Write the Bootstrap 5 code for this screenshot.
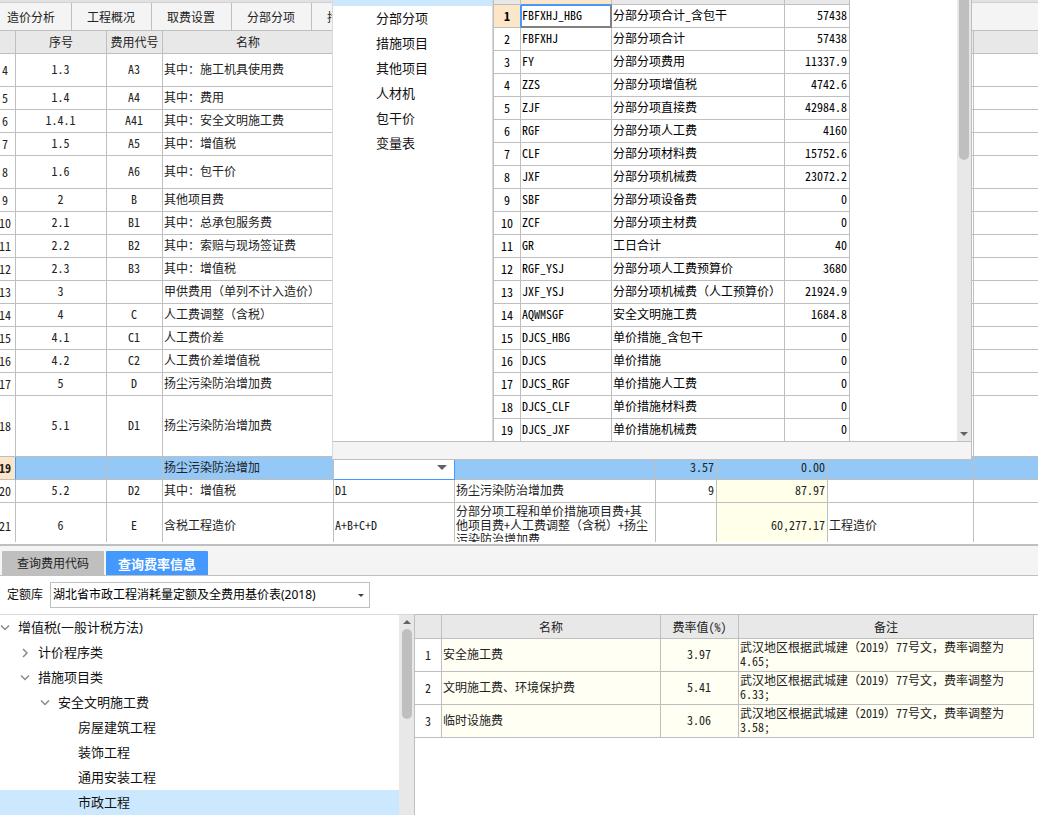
<!DOCTYPE html>
<html lang="zh-CN">
<head>
<meta charset="utf-8">
<meta name="viewport" content="width=device-width, initial-scale=1">
<title>造价分析</title>
<link href="https://cdn.jsdelivr.net/npm/bootstrap@5.3.0/dist/css/bootstrap.min.css" rel="stylesheet">
<style>
  :root { --line: #bfbfbf; --soft: #d9d9d9; --bar: #f4f4f4; --head: #e8e8e8; --blue: #4499ff; --pick: #cce8ff; --row: #93c8f7; --amber: #fde5c8; }
  body { font: 12px/14px "Noto Sans", "Noto Sans CJK SC", sans-serif; color: #222; background: #fff; min-height: 100vh; }
  .strip { height: 3px; background: #e1e1e1; border-bottom: 1px solid #d0d0d0; }
  .main-tabs { height: 28px; background: var(--bar); border-bottom: 1px solid var(--line); overflow: hidden; }
  .main-tabs ul { margin-left: -8px; }
  .main-tabs .nav-link { padding: 0 16px 0 15px; line-height: 29px; font-size: 12px; color: #222; border-right: 1px solid var(--line); width: 80px; white-space: nowrap; }

  .sheet { font: 12px/14px "Noto Sans Mono CJK SC", "Noto Sans CJK SC", sans-serif; border-collapse: separate; border-spacing: 0; table-layout: fixed; color: #222; }
  .sheet th, .sheet td { padding: 0 2px 2px 1px; height: 23px; border-right: 1px solid var(--line); border-bottom: 1px solid var(--line); vertical-align: middle; font-weight: 400; overflow: hidden; }
  .sheet thead th { background: var(--head); text-align: center; white-space: nowrap; padding: 0; }
  .sheet tbody th { text-align: center; padding: 0; background: #fff; }
  .sheet .mid { text-align: center; }
  .sheet .num { text-align: right; }
  .sheet .tall td { height: 33px; }
  .sheet .giant td { height: 61px; }
  .sheet .yellow { background: #ffffea; }
  .viewport { height: 511px; overflow: hidden; }
  .fees tbody th { padding-right: 5px; white-space: nowrap; direction: rtl; }
  .fees tr > :last-child { border-right: 0; }
  .fees .active-row td { background: var(--row); }
  .fees .active-row th { background: var(--amber); border-right: 1px solid var(--blue); font-weight: 700; }
  .fees .last td { height: 46px; }
  .formula { max-height: 42px; }
  .fees .active-row .edit-cell { padding: 0; border-right-color: var(--blue); border-bottom-color: var(--blue); background: #fff; }
  .edit-cell select { height: 22px; border: 0; border-radius: 0; padding: 0; background: #fff url("data:image/svg+xml,%3Csvg xmlns='http://www.w3.org/2000/svg' width='10' height='5'%3E%3Cpath d='M0 0h10L5 5z' fill='%23606266'/%3E%3C/svg%3E") no-repeat right 7px top 8px; background-size: 10px 5px; }
  .split { height: 4px; border-bottom: 2px solid var(--line); }

  .popup { position: absolute; top: 0; left: 332px; width: 640px; height: 460px; background: #fff; border: solid var(--line); border-width: 0 1px 1px 0; border-left: 1px solid var(--soft); overflow: hidden; z-index: 5; }
  .popup-body { height: 442px; border-bottom: 1px solid var(--line); overflow: hidden; }
  .popup-foot { height: 17px; background: var(--bar); }
  .cats { width: 160px; border-right: 1px solid var(--soft); }
  .cats button, .tree button { height: 25px; line-height: 25px; font-size: 13px; color: #111; background: none; border: 0; text-align: left; white-space: nowrap; }
  .cats button { padding: 0 0 0 43px; }
  .cats .picked { height: 6px; background: var(--pick); }
  .vars { width: 357px; border-left: 1px solid var(--line); color: #000; }
  .vars thead th { height: 5px; }
  .vars thead .on, .vars tbody .on { background: var(--amber); }
  .vars thead .on { border-bottom-color: var(--blue); }
  .vars tbody .on { font-weight: 700; border-right-color: var(--blue); }
  .sheet .cursor { border-right: 1px solid #808080; border-bottom: 2px solid #808080; box-shadow: inset 1px 1px var(--blue), inset -1px 0 #808080; }
  .track { width: 14px; background: var(--head); }
  .thumb { width: 10px; background: var(--line); border-radius: 5px; }
  .popup .thumb { height: 160px; border-radius: 0 0 5px 5px; }

  .query-tabs { height: 30px; background: var(--bar); border-bottom: 1px solid var(--line); padding: 5px 2px 0; gap: 2px; }
  .query-tabs .nav-link { width: 102px; height: 24px; line-height: 26px; padding: 0; text-align: center; font-size: 12px; color: #222; background: var(--line); border-radius: 1px 1px 0 0; }
  .query-tabs .nav-link.active { background: var(--blue); color: #fff; font-size: 13px; font-weight: 700; }
  .library { height: 39px; padding-left: 7px; gap: 7px; border-bottom: 1px solid var(--soft); color: #111; }
  .library select { width: 320px; height: 26px; font-size: 12px; line-height: 22px; padding: 0 16px 0 2px; color: #000; border: 1px solid var(--line); border-radius: 0; background: #fff url("data:image/svg+xml,%3Csvg xmlns='http://www.w3.org/2000/svg' width='6' height='3'%3E%3Cpath d='M0 0h6L3 3z' fill='%23444'/%3E%3C/svg%3E") no-repeat right 5px center; background-size: 6px 3px; }
  .tree { width: 399px; }
  .tree button { display: flex; align-items: center; gap: 8px; width: 100%; padding: 0; }
  .tree svg { width: 10px; height: 10px; flex: none; fill: none; stroke: #8a8a8a; stroke-width: 1.5; }
  .tree .lv1 { padding-left: 20px; }
  .tree .lv2 { padding-left: 40px; }
  .tree .lv3 { padding-left: 78px; }
  .tree .picked { background: var(--pick); }
  .tree + .track { width: 15px; }
  .rates-pane { border-left: 1px solid var(--line); border-top: 1px solid var(--line); margin-top: -1px; padding-right: 4px; }
  .rates thead th { height: 24px; }
  .rates tbody td { height: 33px; background: #fffff3; }
</style>
</head>
<body class="d-flex flex-column overflow-hidden">
<main class="position-relative">
  <div class="strip"></div>
  <nav class="main-tabs">
    <ul class="nav flex-nowrap">
      <li><a class="nav-link" href="#">造价分析</a></li>
      <li><a class="nav-link" href="#">工程概况</a></li>
      <li><a class="nav-link" href="#">取费设置</a></li>
      <li><a class="nav-link" href="#">分部分项</a></li>
      <li><a class="nav-link" href="#">措施项目</a></li>
    </ul>
  </nav>
  <div class="viewport">
    <table class="sheet fees w-100">
      <colgroup><col style="width:16px"><col style="width:91px"><col style="width:56px"><col style="width:171px"><col style="width:121px"><col style="width:201px"><col style="width:61px"><col style="width:111px"><col style="width:146px"><col></colgroup>
      <thead><tr><th></th><th>序号</th><th>费用代号</th><th>名称</th><th colspan="5"></th><th></th></tr></thead>
      <tbody>
        <tr class="tall"><th>4</th><td class="mid">1.3</td><td class="mid">A3</td><td>其中：施工机具使用费</td><td colspan="5"></td><td></td></tr>
        <tr><th>5</th><td class="mid">1.4</td><td class="mid">A4</td><td>其中：费用</td><td colspan="5"></td><td></td></tr>
        <tr><th>6</th><td class="mid">1.4.1</td><td class="mid">A41</td><td>其中：安全文明施工费</td><td colspan="5"></td><td></td></tr>
        <tr><th>7</th><td class="mid">1.5</td><td class="mid">A5</td><td>其中：增值税</td><td colspan="5"></td><td></td></tr>
        <tr class="tall"><th>8</th><td class="mid">1.6</td><td class="mid">A6</td><td>其中：包干价</td><td colspan="5"></td><td></td></tr>
        <tr><th>9</th><td class="mid">2</td><td class="mid">B</td><td>其他项目费</td><td colspan="5"></td><td></td></tr>
        <tr><th>10</th><td class="mid">2.1</td><td class="mid">B1</td><td>其中：总承包服务费</td><td colspan="5"></td><td></td></tr>
        <tr><th>11</th><td class="mid">2.2</td><td class="mid">B2</td><td>其中：索赔与现场签证费</td><td colspan="5"></td><td></td></tr>
        <tr><th>12</th><td class="mid">2.3</td><td class="mid">B3</td><td>其中：增值税</td><td colspan="5"></td><td></td></tr>
        <tr><th>13</th><td class="mid">3</td><td></td><td>甲供费用（单列不计入造价）</td><td colspan="5"></td><td></td></tr>
        <tr><th>14</th><td class="mid">4</td><td class="mid">C</td><td>人工费调整（含税）</td><td colspan="5"></td><td></td></tr>
        <tr><th>15</th><td class="mid">4.1</td><td class="mid">C1</td><td>人工费价差</td><td colspan="5"></td><td></td></tr>
        <tr><th>16</th><td class="mid">4.2</td><td class="mid">C2</td><td>人工费价差增值税</td><td colspan="5"></td><td></td></tr>
        <tr><th>17</th><td class="mid">5</td><td class="mid">D</td><td>扬尘污染防治增加费</td><td colspan="5"></td><td></td></tr>
        <tr class="giant"><th>18</th><td class="mid">5.1</td><td class="mid">D1</td><td>扬尘污染防治增加费</td><td colspan="5"></td><td></td></tr>
        <tr class="active-row"><th>19</th><td></td><td></td><td>扬尘污染防治增加</td>
          <td class="edit-cell"><select class="form-select d-block w-100" aria-label="计算基数"><option></option></select></td>
          <td></td><td class="num">3.57</td><td class="num">0.00</td><td></td><td></td></tr>
        <tr><th>20</th><td class="mid">5.2</td><td class="mid">D2</td><td>其中：增值税</td><td>D1</td><td>扬尘污染防治增加费</td><td class="num">9</td><td class="num yellow">87.97</td><td></td><td></td></tr>
        <tr class="last"><th>21</th><td class="mid">6</td><td class="mid">E</td><td>含税工程造价</td><td>A+B+C+D</td><td><div class="formula overflow-hidden">分部分项工程和单价措施项目费+其他项目费+人工费调整（含税）+扬尘污染防治增加费</div></td><td></td><td class="num yellow">60,277.17</td><td>工程造价</td><td></td></tr>
      </tbody>
    </table>
  </div>
  <div class="split"></div>

  <section class="popup">
    <div class="popup-body d-flex">
      <div class="cats d-flex flex-column flex-shrink-0">
        <div class="picked"></div>
        <button type="button">分部分项</button>
        <button type="button">措施项目</button>
        <button type="button">其他项目</button>
        <button type="button">人材机</button>
        <button type="button">包干价</button>
        <button type="button">变量表</button>
      </div>
      <div class="flex-grow-1">
        <table class="sheet vars">
          <colgroup><col style="width:27px"><col style="width:91px"><col style="width:173px"><col style="width:65px"></colgroup>
          <thead><tr><th></th><th class="on"></th><th></th><th></th></tr></thead>
          <tbody>
            <tr><th class="on">1</th><td class="cursor">FBFXHJ_HBG</td><td>分部分项合计_含包干</td><td class="num">57438</td></tr>
            <tr><th>2</th><td>FBFXHJ</td><td>分部分项合计</td><td class="num">57438</td></tr>
            <tr><th>3</th><td>FY</td><td>分部分项费用</td><td class="num">11337.9</td></tr>
            <tr><th>4</th><td>ZZS</td><td>分部分项增值税</td><td class="num">4742.6</td></tr>
            <tr><th>5</th><td>ZJF</td><td>分部分项直接费</td><td class="num">42984.8</td></tr>
            <tr><th>6</th><td>RGF</td><td>分部分项人工费</td><td class="num">4160</td></tr>
            <tr><th>7</th><td>CLF</td><td>分部分项材料费</td><td class="num">15752.6</td></tr>
            <tr><th>8</th><td>JXF</td><td>分部分项机械费</td><td class="num">23072.2</td></tr>
            <tr><th>9</th><td>SBF</td><td>分部分项设备费</td><td class="num">0</td></tr>
            <tr><th>10</th><td>ZCF</td><td>分部分项主材费</td><td class="num">0</td></tr>
            <tr><th>11</th><td>GR</td><td>工日合计</td><td class="num">40</td></tr>
            <tr><th>12</th><td>RGF_YSJ</td><td>分部分项人工费预算价</td><td class="num">3680</td></tr>
            <tr><th>13</th><td>JXF_YSJ</td><td>分部分项机械费（人工预算价）</td><td class="num">21924.9</td></tr>
            <tr><th>14</th><td>AQWMSGF</td><td>安全文明施工费</td><td class="num">1684.8</td></tr>
            <tr><th>15</th><td>DJCS_HBG</td><td>单价措施_含包干</td><td class="num">0</td></tr>
            <tr><th>16</th><td>DJCS</td><td>单价措施</td><td class="num">0</td></tr>
            <tr><th>17</th><td>DJCS_RGF</td><td>单价措施人工费</td><td class="num">0</td></tr>
            <tr><th>18</th><td>DJCS_CLF</td><td>单价措施材料费</td><td class="num">0</td></tr>
            <tr><th>19</th><td>DJCS_JXF</td><td>单价措施机械费</td><td class="num">0</td></tr>
          </tbody>
        </table>
      </div>
      <div class="track d-flex flex-column align-items-center justify-content-between pb-1">
        <div class="thumb"></div>
        <svg width="8" height="5" viewBox="0 0 8 5"><path d="M0 0h8L4 4z" fill="#606266"/></svg>
      </div>
    </div>
    <div class="popup-foot"></div>
  </section>
</main>

<nav class="query-tabs nav flex-nowrap">
  <a class="nav-link" href="#">查询费用代码</a>
  <a class="nav-link active" href="#" aria-current="page">查询费率信息</a>
</nav>
<div class="library d-flex align-items-center">
  <label for="lib">定额库</label>
  <select id="lib" class="form-select"><option>湖北省市政工程消耗量定额及全费用基价表(2018)</option></select>
</div>
<div class="d-flex flex-grow-1">
  <div class="tree flex-shrink-0">
    <button type="button"><svg viewBox="0 0 10 10"><path d="M1 2.5l4 4 4-4"/></svg>增值税(一般计税方法)</button>
    <button type="button" class="lv1"><svg viewBox="0 0 10 10"><path d="M3 1l4 4-4 4"/></svg>计价程序类</button>
    <button type="button" class="lv1"><svg viewBox="0 0 10 10"><path d="M1 2.5l4 4 4-4"/></svg>措施项目类</button>
    <button type="button" class="lv2"><svg viewBox="0 0 10 10"><path d="M1 2.5l4 4 4-4"/></svg>安全文明施工费</button>
    <button type="button" class="lv3">房屋建筑工程</button>
    <button type="button" class="lv3">装饰工程</button>
    <button type="button" class="lv3">通用安装工程</button>
    <button type="button" class="lv3 picked">市政工程</button>
  </div>
  <div class="track flex-shrink-0 d-flex flex-column align-items-center pt-1">
    <svg class="mb-1" width="8" height="6" viewBox="0 0 8 6"><path d="M0 5h8L4 1z" fill="#606266"/></svg>
    <div class="thumb" style="height:90px"></div>
  </div>
  <div class="rates-pane flex-grow-1">
    <table class="sheet rates w-100">
      <colgroup><col style="width:27px"><col style="width:219px"><col style="width:78px"><col></colgroup>
      <thead><tr><th></th><th>名称</th><th>费率值(%)</th><th>备注</th></tr></thead>
      <tbody>
        <tr><th>1</th><td>安全施工费</td><td class="mid">3.97</td><td>武汉地区根据武城建（2019）77号文，费率调整为4.65;</td></tr>
        <tr><th>2</th><td>文明施工费、环境保护费</td><td class="mid">5.41</td><td>武汉地区根据武城建（2019）77号文，费率调整为6.33;</td></tr>
        <tr><th>3</th><td>临时设施费</td><td class="mid">3.06</td><td>武汉地区根据武城建（2019）77号文，费率调整为3.58;</td></tr>
      </tbody>
    </table>
  </div>
</div>
<script src="https://cdn.jsdelivr.net/npm/bootstrap@5.3.0/dist/js/bootstrap.bundle.min.js"></script>
</body>
</html>
